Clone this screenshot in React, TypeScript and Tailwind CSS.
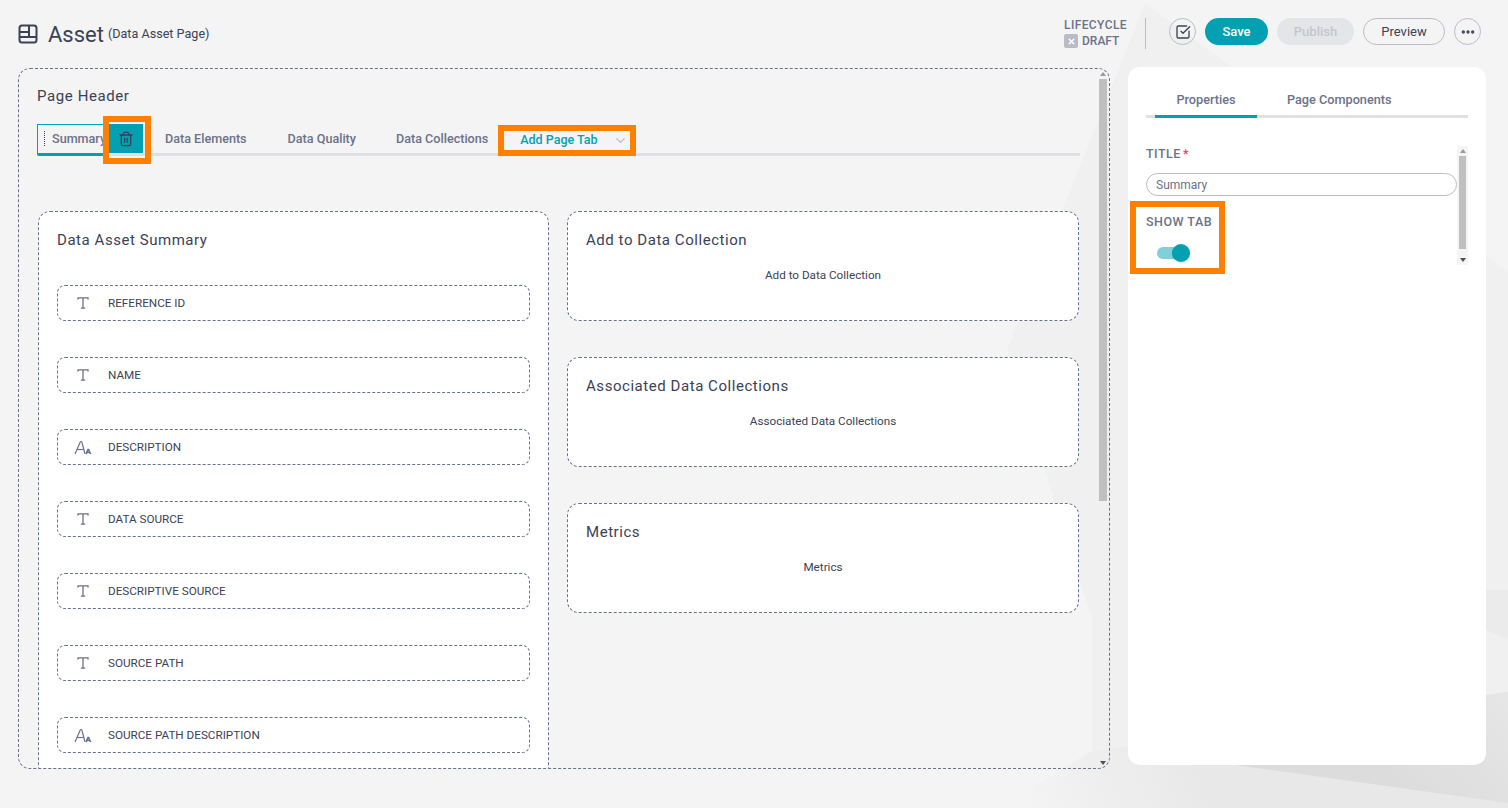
import { Trash2, ChevronDown, Ellipsis, X, SquareCheckBig } from "lucide-react";

const fields = [
  { label: "REFERENCE ID", icon: "t" },
  { label: "NAME", icon: "t" },
  { label: "DESCRIPTION", icon: "a" },
  { label: "DATA SOURCE", icon: "t" },
  { label: "DESCRIPTIVE SOURCE", icon: "t" },
  { label: "SOURCE PATH", icon: "t" },
  { label: "SOURCE PATH DESCRIPTION", icon: "a" },
];

const sideCards = ["Add to Data Collection", "Associated Data Collections", "Metrics"];

function TextIcon() {
  return (
    <svg width="14" height="14" viewBox="0 0 14 14" fill="none" stroke="#6b7289" strokeWidth="1.3">
      <path d="M2 3.4V1.8H12V3.4M7 1.8V12.2M4.8 12.2H9.2" />
    </svg>
  );
}

function FontIcon() {
  return (
    <svg width="18" height="16" viewBox="0 0 18 16" fill="none" stroke="#6b7289" strokeWidth="1.2">
      <path d="M1 15L6 3.5Q7 1 8 3.5L11 15" />
      <path d="M3 10.5H9.5" />
      <path d="M12 15L14 10.5H14.6L16.6 15M12.8 13.5H15.8" strokeWidth="1.6" />
    </svg>
  );
}

function LayoutIcon() {
  return (
    <svg width="20" height="20" viewBox="0 0 20 20" fill="none" stroke="#3a4256" strokeWidth="2">
      <rect x="1.5" y="1.5" width="17" height="17" rx="2.5" />
      <path d="M1.5 8H11M11 1.5V13M1.5 13H18.5" />
    </svg>
  );
}

function ScrollArrow({ up }: { up?: boolean }) {
  return (
    <div
      className={`h-0 w-0 border-x-[3.5px] border-x-transparent ${
        up ? "border-b-[4px] border-b-[#9a9a9a]" : "border-t-[4px] border-t-[#505050]"
      }`}
    />
  );
}

function Background() {
  return (
    <svg className="absolute inset-0" width="1508" height="808" viewBox="0 0 1508 808">
      <defs>
        <linearGradient id="floor" gradientUnits="userSpaceOnUse" x1="1020" y1="808" x2="1190" y2="740">
          <stop offset="0" stopColor="#f4f4f4" />
          <stop offset="1" stopColor="#e8e8e8" />
        </linearGradient>
        <linearGradient id="band" gradientUnits="userSpaceOnUse" x1="1400" y1="790" x2="1508" y2="690">
          <stop offset="0" stopColor="#dcdcdc" />
          <stop offset="1" stopColor="#e6e6e6" />
        </linearGradient>
      </defs>
      <polygon points="1145,3 1508,272 1508,700 1092,752 1092,620 1007,350" fill="#f0f0f0" />
      <polygon points="1486,590 1508,590 1508,640 1486,630" fill="#ebebeb" />
      <polygon points="1000,808 1090,752 1508,692 1508,808" fill="url(#floor)" />
      <polygon points="1235,765 1486,695 1508,692 1508,803" fill="url(#band)" />
    </svg>
  );
}

export default function App() {
  return (
    <div className="relative h-[808px] w-[1508px] overflow-hidden bg-[#f4f4f4] font-['Roboto',sans-serif]">
      <Background />
      <div className="relative flex h-full flex-col px-[18px] pt-[18px]">
        <header className="flex h-[50px] shrink-0 items-start">
          <div className="flex h-[32px] items-center">
            <LayoutIcon />
            <span className="ml-[10px] mt-px text-[22px] leading-none text-[#3a4256]">Asset</span>
            <span className="ml-[4px] text-[12.6px] text-[#3a4256]">(Data Asset Page)</span>
          </div>
          <div className="ml-auto mr-[9px] flex items-start">
            <div className="-mt-px w-[81px] text-[12px] font-medium leading-4 text-[#6b7289]">
              <div className="tracking-[0.4px]">LIFECYCLE</div>
              <div className="flex items-center gap-[4px]">
                <span className="flex h-[14px] w-[14px] items-center justify-center rounded-[2px] bg-[#b9bcc4]">
                  <X size={9} strokeWidth={4} className="text-white" />
                </span>
                DRAFT
              </div>
            </div>
            <div className="h-[31px] w-px bg-[#b9bcc4]" />
            <button className="ml-[23px] flex h-[27px] w-[27px] items-center justify-center rounded-full border border-[#b9bcc4]">
              <SquareCheckBig size={16} strokeWidth={2} className="text-[#3a4256]" />
            </button>
            <button className="ml-[9px] h-[27px] w-[63px] rounded-full bg-[#03a0b2] text-[13px] font-medium text-white">
              Save
            </button>
            <button className="ml-[9px] h-[27px] w-[77px] rounded-full bg-[#e4e5e8] text-[13px] font-medium text-[#c4c6cc]">
              Publish
            </button>
            <button className="ml-[9px] h-[27px] w-[82px] rounded-full border border-[#b9bcc4] pt-px text-[13px] text-[#3a4256]">
              Preview
            </button>
            <button className="ml-[9px] flex h-[27px] w-[27px] items-center justify-center rounded-full border border-[#b9bcc4]">
              <Ellipsis size={16} strokeWidth={3} className="text-[#3a4256]" />
            </button>
          </div>
        </header>

        <div className="flex items-start gap-[18px]">
          <main className="relative flex h-[701px] w-[1092px] shrink-0 rounded-[12px] border border-dashed border-[#68708c]">
            <div className="min-w-0 flex-1 overflow-hidden pl-[18px] pr-[18px] pt-[17px]">
              <h2 className="text-[15px] leading-5 tracking-[0.6px] text-[#3a4256]">Page Header</h2>
              <div className="mt-[18px] flex h-[32px] w-[1043px] items-start border-b-[3px] border-[#e0e0e4] text-[12.6px] font-medium text-[#6b7289]">
                <div className="relative -mb-[3px] flex h-[32px] w-[72px] items-center overflow-visible rounded-bl-[2px] border-x border-t border-[#03a0b2] border-b-[3px] border-b-[#03a0b2] pl-[14px]">
                  <span className="absolute left-[6px] top-[6px] h-[15px] border-l border-dotted border-[#3a4256]" />
                  Summary
                  <div className="absolute left-[71px] -top-px flex h-[29px] w-[34px] items-center justify-center bg-[#03a0b2]">
                    <Trash2 size={16} strokeWidth={2} className="text-[#3a4256]" />
                  </div>
                </div>
                <span className="ml-[56px] mt-[6px]">Data Elements</span>
                <span className="ml-[41px] mt-[6px]">Data Quality</span>
                <span className="ml-[40px] mt-[6px]">Data Collections</span>
                <div className="ml-[32px] mt-[7px] flex items-center text-[12.5px] text-[#03a0b2]">
                  Add Page Tab
                  <ChevronDown size={15} className="ml-[15px] text-[#b9bcc4]" />
                </div>
              </div>

              <div className="ml-px mt-[55px] flex items-start gap-[18px]">
                <section className="h-[640px] w-[511px] shrink-0 rounded-[12px] border border-dashed border-[#68708c] bg-white px-[18px] pt-[18px]">
                  <h3 className="text-[15px] leading-5 tracking-[0.55px] text-[#3a4256]">Data Asset Summary</h3>
                  <div className="mt-[35px] flex flex-col gap-[36px]">
                    {fields.map((f) => (
                      <div
                        key={f.label}
                        className="flex h-[36px] items-center rounded-[8px] border border-dashed border-[#68708c] bg-white"
                      >
                        <span className="flex w-[50px] justify-center">
                          {f.icon === "t" ? <TextIcon /> : <FontIcon />}
                        </span>
                        <span className="pt-px text-[11.7px] text-[#3a4256]">{f.label}</span>
                      </div>
                    ))}
                  </div>
                </section>
                <div className="flex w-[512px] shrink-0 flex-col gap-[36px]">
                  {sideCards.map((title) => (
                    <section
                      key={title}
                      className="h-[110px] rounded-[12px] border border-dashed border-[#68708c] bg-white px-[18px] pt-[18px]"
                    >
                      <h3 className="text-[15px] leading-5 tracking-[0.55px] text-[#3a4256]">{title}</h3>
                      <p className="mt-[17px] text-center text-[11.7px] leading-4 text-[#3a4256]">{title}</p>
                    </section>
                  ))}
                </div>
              </div>
            </div>
            <div className="mr-px flex w-[10px] shrink-0 flex-col items-center pt-[3px] pb-[3px]">
              <ScrollArrow up />
              <div className="mt-[3px] h-[422px] w-[8px] bg-[#bfbfbf]" />
              <div className="flex-1" />
              <ScrollArrow />
            </div>
          </main>

          <aside className="-mt-px h-[698px] w-[358px] shrink-0 rounded-[12px] bg-white px-[18px] pt-[22px]">
            <div className="flex h-[29px] border-b-[3px] border-[#e0e0e4] pl-[9px] text-[12.7px] font-medium text-[#6b7289]">
              <div className="-mb-[3px] flex h-[29px] w-[102px] justify-center border-b-[3px] border-[#03a0b2] pt-px">
                Properties
              </div>
              <div className="ml-[30px] pt-px">Page Components</div>
            </div>
            <div className="mt-[28px] flex h-[119px]">
              <div className="w-[311px] shrink-0 pt-px">
                <div className="text-[12.5px] font-medium leading-[14px] tracking-[0.5px] text-[#6b7289]">
                  TITLE<span className="ml-[2px] text-[#e8436a]">*</span>
                </div>
                <div className="mt-[12px] flex h-[23px] items-center rounded-full border border-[#b9bcc4] pl-[9px] text-[12px] text-[#6b7289]">
                  Summary
                </div>
                <div className="mt-[19px] text-[12.5px] font-medium leading-[14px] tracking-[0.5px] text-[#6b7289]">
                  SHOW TAB
                </div>
                <div className="ml-[11px] mt-[15px] flex h-[18px] w-[33px] items-center">
                  <div className="relative h-[12px] w-[30px] rounded-full bg-[#81d0d8]">
                    <div className="absolute -top-[3px] left-[15px] h-[18px] w-[18px] rounded-full bg-[#03a0b2] shadow-sm" />
                  </div>
                </div>
              </div>
              <div className="flex w-[11px] shrink-0 flex-col items-center bg-[#f5f5f5] py-[3px]">
                <ScrollArrow up />
                <div className="mt-[3px] h-[93px] w-[7px] bg-[#bfbfbf]" />
                <div className="flex-1" />
                <ScrollArrow />
              </div>
            </div>
          </aside>
        </div>
      </div>

      {/* orange annotation boxes */}
      <div className="absolute left-[103px] top-[116px] h-[48px] w-[48px] border-[6px] border-[#ff7f00]" />
      <div className="absolute left-[498px] top-[125px] h-[31px] w-[138px] border-[6px] border-[#ff7f00]" />
      <div className="absolute left-[1130px] top-[201px] h-[73px] w-[95px] border-[6px] border-[#ff7f00]" />
    </div>
  );
}
